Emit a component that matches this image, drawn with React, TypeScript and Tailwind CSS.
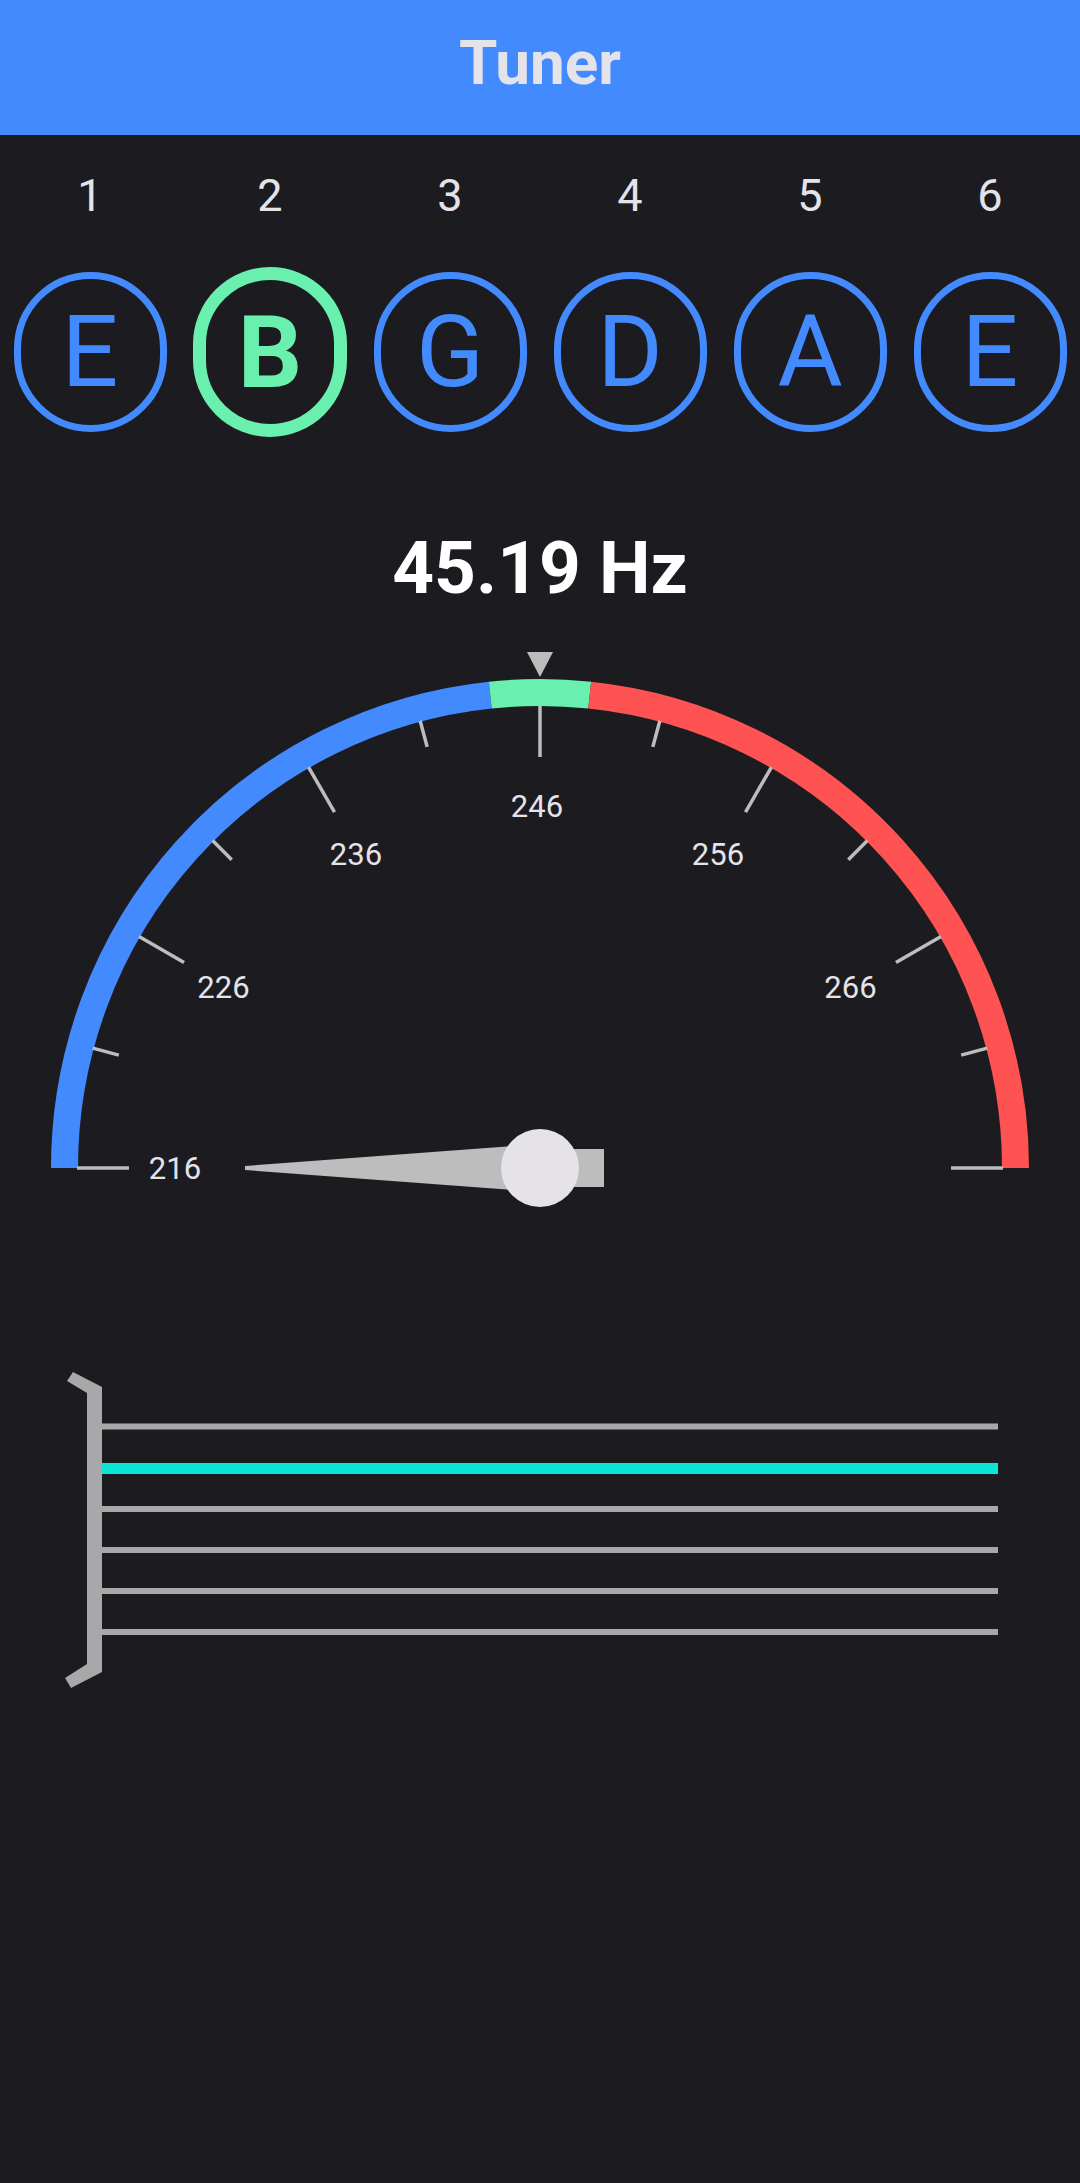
import React from 'react';

const STRINGS = [
  { num: 1, note: 'E' },
  { num: 2, note: 'B', active: true },
  { num: 3, note: 'G' },
  { num: 4, note: 'D' },
  { num: 5, note: 'A' },
  { num: 6, note: 'E' },
];

const CX = 540;
const CY = 557;
const R = 475.5;

// math angle in degrees -> svg point
const pt = (deg: number, r: number) => {
  const a = (deg * Math.PI) / 180;
  return { x: CX + r * Math.cos(a), y: CY - r * Math.sin(a) };
};

const arc = (from: number, to: number, r: number) => {
  const p1 = pt(from, r);
  const p2 = pt(to, r);
  return `M ${p1.x} ${p1.y} A ${r} ${r} 0 0 1 ${p2.x} ${p2.y}`;
};

const Gauge: React.FC = () => {
  const ticks: number[] = [];
  for (let hz = 216; hz <= 276; hz += 5) ticks.push(hz);

  return (
    <svg width={1080} height={620} viewBox="0 0 1080 620" className="block">
      <path d={arc(180, 96, R)} stroke="#448aff" strokeWidth={27} fill="none" />
      <path d={arc(96, 84, R)} stroke="#69f0ae" strokeWidth={27} fill="none" />
      <path d={arc(84, 0, R)} stroke="#ff5252" strokeWidth={27} fill="none" />

      {ticks.map((hz) => {
        const deg = 180 - (hz - 216) * 3;
        const major = (hz - 216) % 10 === 0;
        const a = pt(deg, 463);
        const b = pt(deg, major ? 411 : 436);
        return (
          <line key={hz} x1={a.x} y1={a.y} x2={b.x} y2={b.y} stroke="#bdbdbd" strokeWidth={3.5} />
        );
      })}

      {ticks
        .filter((hz) => (hz - 216) % 10 === 0 && hz < 276)
        .map((hz) => {
          const p = pt(180 - (hz - 216) * 3, 362);
          return (
            <text
              key={hz}
              x={p.x - 3}
              y={p.y}
              textAnchor="middle"
              dominantBaseline="central"
              fill="#e5e3ea"
              fontSize={31}
              fontFamily="Roboto, 'Noto Sans', sans-serif"
            >
              {hz}
            </text>
          );
        })}

      <polygon points="527,41 553,41 540,66" fill="#bdbdbd" />

      {/* needle */}
      <polygon points="245,555 540,533 540,581 245,559" fill="#bdbdbd" />
      <rect x={540} y={538} width={64} height={38} fill="#bdbdbd" />
      <circle cx={CX} cy={CY} r={39} fill="#e6e3e8" />
    </svg>
  );
};

const Fretboard: React.FC = () => {
  const lines = [66.5, 108.5, 149, 190, 231, 272];
  return (
    <svg width={1080} height={340} viewBox="0 0 1080 340" className="block">
      <polygon
        points="73,12 102,27 102,312 71,328 65,318 87,304 87,33 67,21"
        fill="#a8a8a8"
      />
      {lines.map((y, i) => {
        const active = i === 1;
        const h = active ? 11 : 6;
        return (
          <rect
            key={i}
            x={102}
            y={y - h / 2}
            width={896}
            height={h}
            fill={active ? '#0ae6d6' : '#a8a8a8'}
          />
        );
      })}
    </svg>
  );
};

const App: React.FC = () => {
  return (
    <div
      className="min-h-screen w-full bg-[#1c1c20] flex flex-col"
      style={{ fontFamily: "Roboto, 'Noto Sans', sans-serif" }}
    >
      {/* Header */}
      <header className="h-[135px] bg-[#448aff] flex items-center justify-center pb-[10px]">
        <h1 className="text-[62px] font-bold text-[#e5e3ea] leading-none">Tuner</h1>
      </header>

      {/* String numbers */}
      <div className="grid grid-cols-6 pt-[35px]">
        {STRINGS.map((s) => (
          <div key={s.num} className="text-center text-[45px] leading-[52px] text-[#e5e3ea]">
            {s.num}
          </div>
        ))}
      </div>

      {/* Note buttons */}
      <div className="grid grid-cols-6 mt-[45px] h-[170px] items-center">
        {STRINGS.map((s, i) => (
          <div key={i} className="flex justify-center">
            {s.active ? (
              <div className="w-[154px] h-[170px] rounded-full border-[13px] border-[#69f0ae] flex items-center justify-center text-[101px] font-bold leading-none text-[#69f0ae]">
                {s.note}
              </div>
            ) : (
              <div className="w-[153px] h-[160px] rounded-full border-[7px] border-[#448aff] flex items-center justify-center text-[100px] leading-none text-[#448aff]">
                {s.note}
              </div>
            )}
          </div>
        ))}
      </div>

      {/* Frequency */}
      <div className="mt-[88px] text-center text-[73px] leading-[86px] font-bold text-white">
        45.19 Hz
      </div>

      <Gauge />

      <div className="mt-[129px]">
        <Fretboard />
      </div>
    </div>
  );
};

export default App;
